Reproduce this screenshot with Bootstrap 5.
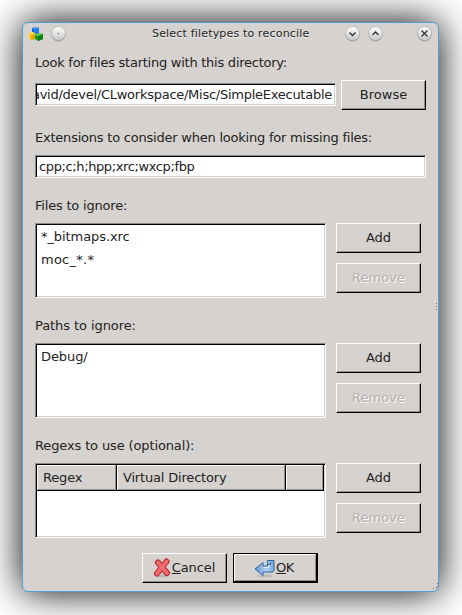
<!DOCTYPE html>
<html lang="en">
<head>
<meta charset="utf-8">
<title>Select filetypes to reconcile</title>
<link href="https://cdn.jsdelivr.net/npm/bootstrap@5.3.0/dist/css/bootstrap.min.css" rel="stylesheet">
<style>
body{background:#fff;width:462px;height:615px;overflow:hidden;padding:22px 23px 23px 22px;font-family:"DejaVu Sans",sans-serif;font-size:13px;line-height:20px;color:#232323}
.dialog-win{width:417px;height:570px;background:#d6d2cf;border:1px solid #4fa0d0;border-radius:6px;box-shadow:0 0 38px #000}
.titlebar{height:23px;padding:0 5px}
.titlebar svg{display:block;flex:none;position:relative;top:-1px}
.caption{font-size:11px;width:160px;margin-left:85px;white-space:nowrap;text-shadow:0 1px 0 #eee;letter-spacing:.18px;line-height:20px;margin-top:-2px}
.content{padding:7px 12px 0}
.lbl{height:20px;white-space:nowrap}
.t-look{letter-spacing:-.25px}
.t-ext{letter-spacing:-.22px}
.t-files{letter-spacing:-.2px}
.t-paths{letter-spacing:-.08px}
.t-regex{letter-spacing:-.13px}
.sunken{background:#fff;border:1px solid;border-color:#888 #fff #fff #888;box-shadow:inset 1px 1px #000,inset -1px -1px #d6d2cf}
.field{height:23px;padding:0 2px 0 3px;line-height:21px;white-space:nowrap;overflow:hidden;letter-spacing:-.38px}
.pathfield{width:301px;padding:0;margin-top:3px;letter-spacing:-.26px}
.pathtext{margin-right:3px;margin-left:1px;overflow:hidden;display:flex;justify-content:flex-end}
.btn3d,.btn3d:disabled{width:85px;height:30px;background:#d6d2cf;border:1px solid;border-color:#fff #000 #000 #fff;border-radius:0;box-shadow:inset -1px -1px #938f8b;font-size:13px;line-height:20px;color:#232323;padding:0;opacity:1}
.btn3d:disabled{color:#b3afac;text-shadow:1px 1px #fff}
.btn3d.default{border:1px solid #000;box-shadow:inset -1px -1px #000,inset 1px 1px #fff,inset -2px -2px #938f8b}
.listbox{width:291px;height:75px}
.item{height:23px;line-height:24px;padding-left:5px;letter-spacing:-.08px}
.section{height:120px}
.hdr{height:26px;margin:1px 1px 0;background:#000}
.hdr span{background:#d6d2cf;border:1px solid;border-color:#fff #938f8b #938f8b #fff;margin:0 1px 1px 0;padding-left:5px;line-height:23px;height:25px;white-space:nowrap;letter-spacing:-.18px}
.grip{right:23px;bottom:24px}
.sash{left:435px;top:303px}
</style>
</head>
<body>
<main class="dialog-win">
  <header class="titlebar d-flex align-items-center">
    <svg width="16" height="16" viewBox="0 0 16 16">
      <path d="M4 2l5-1 2 1v6l-5 1-2-2z" fill="#1266d6"/><path d="M4 2l5-1 2 1-5 1z" fill="#65adff"/><path d="M6 3l5-1v6L6 9z" fill="#247deb"/>
      <path d="M1 7l4-1 3 2v5l-4 1-3-2z" fill="#e9a400"/><path d="M1 7l4-1 2 2-4 1z" fill="#ffdf58"/><path d="M1 7l2 2v5l-2-2z" fill="#ffc91d"/>
      <path d="M7 9l5-2 3 1v5l-5 2-3-2z" fill="#15991c"/><path d="M7 9l5-2 3 1-5 2z" fill="#78dc58"/><path d="M10 10l5-2v5l-5 2z" fill="#098213"/>
    </svg>
    <svg width="17" height="17" viewBox="0 0 17 17" style="margin-left:6px"><circle cx="8.500" cy="9.500" r="7" fill="#999"/><circle cx="8.500" cy="8.500" r="7" fill="url(#orb)" stroke="#aaa" stroke-width=".7"/><path d="M8 8h1v1h-1z" fill="#555"/>
      <defs><linearGradient id="orb" x2="0" y2="1"><stop stop-color="#fff"/><stop offset="1" stop-color="#c9c7c5"/></linearGradient></defs></svg>
    <span class="caption">Select filetypes to reconcile</span>
    <svg class="ms-auto" width="17" height="17" viewBox="0 0 17 17"><circle cx="8.500" cy="9.500" r="7" fill="#999"/><circle cx="8.500" cy="8.500" r="7" fill="url(#orb)" stroke="#aaa" stroke-width=".7"/><path d="M5.500 7.500l3 3 3-3" fill="none" stroke="#333" stroke-width="1.4"/></svg>
    <svg width="17" height="17" viewBox="0 0 17 17" style="margin-left:6px"><circle cx="8.500" cy="9.500" r="7" fill="#999"/><circle cx="8.500" cy="8.500" r="7" fill="url(#orb)" stroke="#aaa" stroke-width=".7"/><path d="M5.500 10l3-3 3 3" fill="none" stroke="#333" stroke-width="1.4"/></svg>
    <svg width="17" height="17" viewBox="0 0 17 17" style="margin-left:32px"><circle cx="8.500" cy="9.500" r="7" fill="#999"/><circle cx="8.500" cy="8.500" r="7" fill="url(#orb)" stroke="#aaa" stroke-width=".7"/><path d="M5.500 5.500l6 6m0-6l-6 6" fill="none" stroke="#333" stroke-width="1.3"/></svg>
  </header>
  <div class="content">
    <div class="lbl t-look">Look for files starting with this directory:</div>
    <div class="d-flex" style="margin-top:7px">
      <div class="sunken field pathfield"><div class="pathtext"><span>avid/devel/CLworkspace/Misc/SimpleExecutable</span></div></div>
      <button class="btn btn3d" style="margin-left:5px">Browse</button>
    </div>
    <div class="lbl t-ext" style="margin-top:18px">Extensions to consider when looking for missing files:</div>
    <div class="sunken field" style="margin-top:7px">cpp;c;h;hpp;xrc;wxcp;fbp</div>
    <div style="height:18px"></div>
    <section class="section">
      <div class="lbl t-files">Files to ignore:</div>
      <div class="d-flex" style="margin-top:7px;gap:10px">
        <div class="sunken listbox pt-1"><div class="item" style="margin-top:-3px">*_bitmaps.xrc</div><div class="item" style="letter-spacing:.25px">moc_*.*</div></div>
        <div class="d-flex flex-column" style="gap:10px"><button class="btn btn3d">Add</button><button class="btn btn3d" disabled>Remove</button></div>
      </div>
    </section>
    <section class="section">
      <div class="lbl t-paths">Paths to ignore:</div>
      <div class="d-flex" style="margin-top:7px;gap:10px">
        <div class="sunken listbox pt-1"><div class="item" style="margin-top:-3px">Debug/</div></div>
        <div class="d-flex flex-column" style="gap:10px"><button class="btn btn3d">Add</button><button class="btn btn3d" disabled>Remove</button></div>
      </div>
    </section>
    <section class="section">
      <div class="lbl t-regex">Regexs to use (optional):</div>
      <div class="d-flex" style="margin-top:7px;gap:10px">
        <div class="sunken listbox"><div class="hdr d-flex"><span style="width:79px">Regex</span><span style="width:168px">Virtual Directory</span><span class="flex-fill"></span></div></div>
        <div class="d-flex flex-column" style="gap:10px"><button class="btn btn3d">Add</button><button class="btn btn3d" disabled>Remove</button></div>
      </div>
    </section>
    <div class="d-flex" style="margin:-3px 0 0 107px;gap:6px">
      <button class="btn btn3d d-flex align-items-center justify-content-center">
        <svg width="19" height="20" viewBox="0 0 19 20"><ellipse cx="8" cy="18" rx="7" ry="1.6" fill="#aaa" opacity=".6"/><path d="M5 4.500L14 15M13.500 3.500L4 15.500" stroke="#b3262c" stroke-width="6" stroke-linecap="round"/><path d="M5 4.500L14 15M13.500 3.500L4 15.500" stroke="#f06a70" stroke-width="4" stroke-linecap="round"/></svg>
        <span style="margin-right:1px;letter-spacing:-.1px"><u>C</u>ancel</span></button>
      <button class="btn btn3d default d-flex align-items-center justify-content-center">
        <svg width="22" height="20" viewBox="0 0 22 20"><ellipse cx="11" cy="18" rx="8" ry="1.500" fill="#aaa" opacity=".6"/><path d="M1 11L9 4.500V8h4.500V2.500h6.500V12Q20 14 18 14H9v3.500z" fill="url(#ent)" stroke="#2f65a3"/><path d="M9.500 9.500H15V7" fill="none" stroke="#dcecff"/><path d="M13.500 2.500V6.500h3V4" fill="none" stroke="#2f65a3"/>
          <defs><linearGradient id="ent"><stop stop-color="#5e97d5"/><stop offset=".6" stop-color="#b6d3ef"/><stop offset="1" stop-color="#78a7da"/></linearGradient></defs></svg>
        <span style="letter-spacing:-.5px;margin-right:3px"><u>O</u>K</span></button>
    </div>
  </div>
</main>
<svg class="grip position-absolute" width="8" height="8"><path d="M6 0h1v1H6zM5 4h1v1H5zM2 5h1v1H2zM6 3h1v1H6z" fill="#777"/></svg>
<svg class="sash position-absolute" width="3" height="8"><path d="M1 0h1v1H1zM1 3h1v1H1zM1 6h1v1H1z" fill="#777"/></svg>
<script src="https://cdn.jsdelivr.net/npm/bootstrap@5.3.0/dist/js/bootstrap.bundle.min.js"></script>
</body>
</html>
